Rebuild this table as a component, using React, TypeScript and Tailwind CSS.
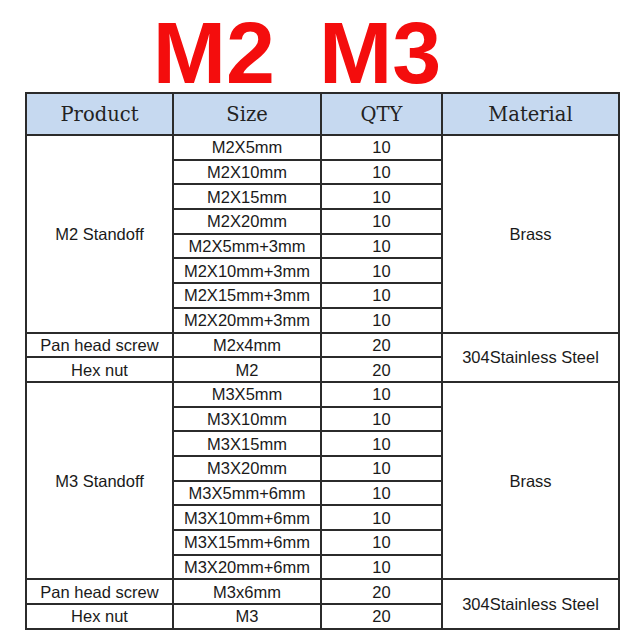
import React from "react";

type Row = { product?: string; span?: number; size: string; qty: string; material?: string; mspan?: number };

const rows: Row[] = [
  { product: "M2 Standoff", span: 8, size: "M2X5mm", qty: "10", material: "Brass", mspan: 8 },
  { size: "M2X10mm", qty: "10" },
  { size: "M2X15mm", qty: "10" },
  { size: "M2X20mm", qty: "10" },
  { size: "M2X5mm+3mm", qty: "10" },
  { size: "M2X10mm+3mm", qty: "10" },
  { size: "M2X15mm+3mm", qty: "10" },
  { size: "M2X20mm+3mm", qty: "10" },
  { product: "Pan head screw", span: 1, size: "M2x4mm", qty: "20", material: "304Stainless Steel", mspan: 2 },
  { product: "Hex nut", span: 1, size: "M2", qty: "20" },
  { product: "M3 Standoff", span: 8, size: "M3X5mm", qty: "10", material: "Brass", mspan: 8 },
  { size: "M3X10mm", qty: "10" },
  { size: "M3X15mm", qty: "10" },
  { size: "M3X20mm", qty: "10" },
  { size: "M3X5mm+6mm", qty: "10" },
  { size: "M3X10mm+6mm", qty: "10" },
  { size: "M3X15mm+6mm", qty: "10" },
  { size: "M3X20mm+6mm", qty: "10" },
  { product: "Pan head screw", span: 1, size: "M3x6mm", qty: "20", material: "304Stainless Steel", mspan: 2 },
  { product: "Hex nut", span: 1, size: "M3", qty: "20" },
];

const cell = "border-2 border-[#2b2b2b] text-center align-middle p-0";

export default function App() {
  return (
    <div className="w-[640px] h-[640px] bg-white overflow-hidden" style={{ fontFamily: '"Liberation Sans", Arial, sans-serif' }}>
      <div className="flex justify-center gap-[44px] pr-[46px] pt-[9px] h-[92px] text-[#f40d0d] font-bold text-[88px] leading-[88px]">
        <span>M2</span>
        <span>M3</span>
      </div>
      <table className="ml-[25px] w-[593px] border-collapse table-fixed text-[#1a1a1a] text-[16.5px]">
        <colgroup>
          <col className="w-[147px]" />
          <col className="w-[148px]" />
          <col className="w-[121px]" />
          <col className="w-[177px]" />
        </colgroup>
        <thead>
          <tr className="h-[42px] bg-[#c6d9f0] text-[19.5px] text-[#222]" style={{ fontFamily: '"DejaVu Serif", "Liberation Serif", serif' }}>
            <th className={`${cell} font-normal pt-[2px]`}>Product</th>
            <th className={`${cell} font-normal pt-[2px]`}>Size</th>
            <th className={`${cell} font-normal pt-[2px]`}>QTY</th>
            <th className={`${cell} font-normal pt-[2px]`}>Material</th>
          </tr>
        </thead>
        <tbody>
          {rows.map((r, i) => (
            <tr key={i} className="h-[24.7px] leading-[20px]">
              {r.product && (
                <td rowSpan={r.span} className={cell}>
                  {r.product}
                </td>
              )}
              <td className={cell}>{r.size}</td>
              <td className={cell}>{r.qty}</td>
              {r.material && (
                <td rowSpan={r.mspan} className={cell}>
                  {r.material}
                </td>
              )}
            </tr>
          ))}
        </tbody>
      </table>
    </div>
  );
}
